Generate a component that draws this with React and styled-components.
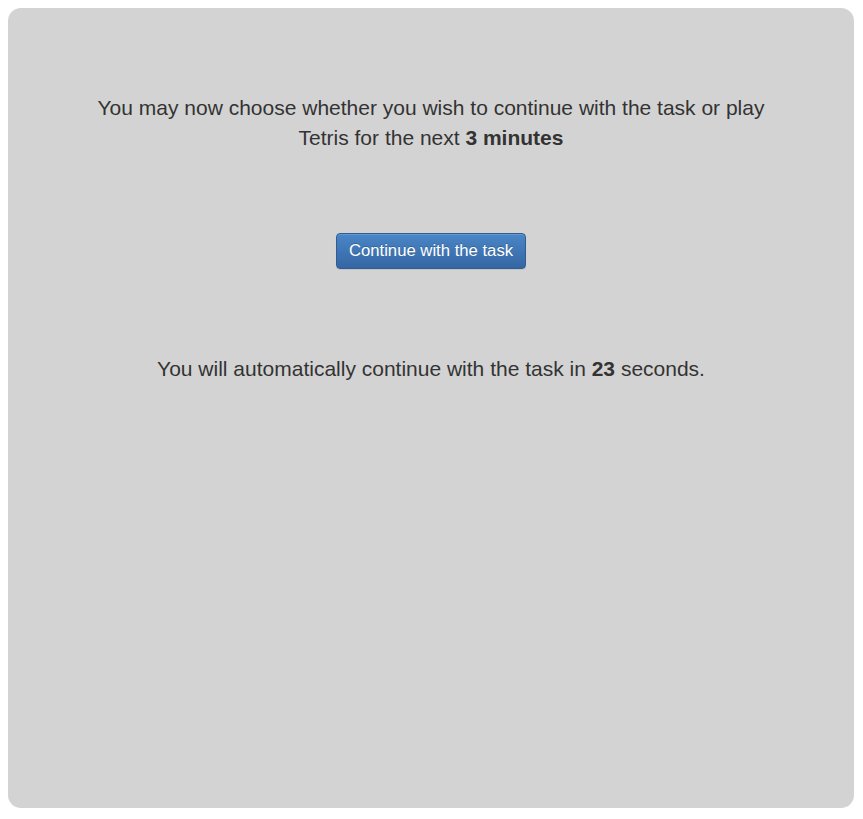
import React from "react";
import styled, { createGlobalStyle } from "styled-components";

const GlobalStyle = createGlobalStyle`
	body {
		margin: 8px;
		background: #fff;
		font-family: "Liberation Sans", Arial, sans-serif;
		color: #333;
	}
`;

const Panel = styled.div`
	width: 846px;
	height: 800px;
	box-sizing: border-box;
	background-color: #d3d3d3;
	border-radius: 13px;
	padding-top: 85px;
	display: flex;
	flex-direction: column;
	align-items: center;
`;

const Message = styled.p`
	margin: 0;
	max-width: ${(p) => p.$width || "690px"};
	font-size: 21px;
	line-height: 30px;
	text-align: center;
	b {
		font-weight: bold;
	}
`;

const Button = styled.button`
	margin: 80px 0 85px;
	padding: 6px 12px;
	font-family: "Liberation Sans", Arial, sans-serif;
	font-size: 16.7px;
	line-height: 22px;
	color: #fff;
	background-image: linear-gradient(to bottom, #4a86c6 0, #3566a4 100%);
	border: 1px solid #2f5d93;
	border-radius: 4px;
	text-shadow: 0 -1px 0 rgba(0, 0, 0, 0.2);
	box-shadow: inset 0 1px 0 rgba(255, 255, 255, 0.15), 0 1px 1px rgba(0, 0, 0, 0.075);
	cursor: pointer;
`;

export default function App() {
	return (
		<>
			<GlobalStyle />
			<Panel>
				<Message>
					You may now choose whether you wish to continue with the task or play Tetris
					for the next <b>3 minutes</b>
				</Message>
				<Button>Continue with the task</Button>
				<Message $width="none">
					You will automatically continue with the task in <b>23</b> seconds.
				</Message>
			</Panel>
		</>
	);
}
